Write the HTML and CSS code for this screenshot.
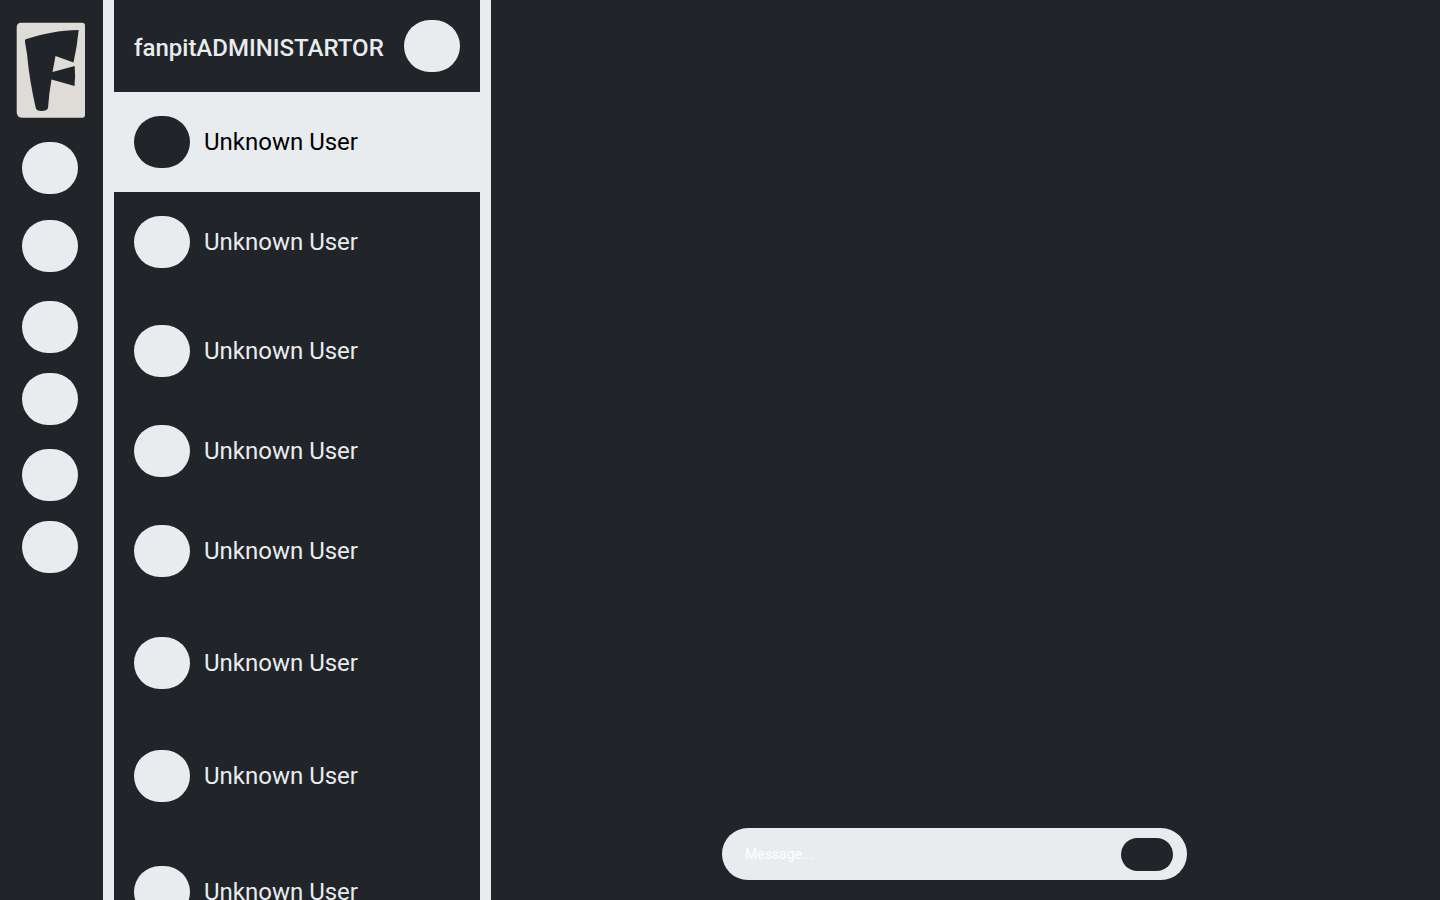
FILE: index.html
```html
<!DOCTYPE html>
<html lang="en">
<head>
<meta charset="utf-8">
<meta name="viewport" content="width=device-width, initial-scale=1">
<title>fanpit</title>
<link rel="stylesheet" href="styles.css">
</head>
<body>
<div class="app">
  <nav class="rail" aria-label="Servers">
    <a class="logo" href="#" aria-label="fanpit home">
      <svg width="70" height="96" viewBox="0 0 70 96" aria-hidden="true">
        <path d="M5 0.700H66Q69 0.700 69 3.500V93Q69 95.700 66 95.700H6Q0.700 95.700 0.700 90V5.500Q0.700 0.700 5 0.700Z" fill="#dfdbd6"/>
        <path d="M9 18.500Q9 17.300 10.500 17C26 12 44 8 62.700 8Q61 25 57.500 40.500L39.500 34L36.500 50L58.700 44Q59.600 54 58.500 64L35.500 57.500Q33 71 32 86Q31 89 25.500 89Q20.500 89 19.800 86Q13.500 59 11 32L9 20Z" fill="#212529"/>
      </svg>
    </a>
    <div class="rail-list">
      <button class="avatar" type="button" aria-label="Server 1"></button>
      <button class="avatar gap-l" type="button" aria-label="Server 2"></button>
      <button class="avatar gap-xl" type="button" aria-label="Server 3"></button>
      <button class="avatar gap-s" type="button" aria-label="Server 4"></button>
      <button class="avatar gap-m" type="button" aria-label="Server 5"></button>
      <button class="avatar gap-s" type="button" aria-label="Server 6"></button>
    </div>
  </nav>
  <aside class="contacts">
    <header class="profile">
      <h1 class="profile-name">fanpitADMINISTARTOR</h1>
      <button class="avatar" type="button" aria-label="Profile"></button>
    </header>
    <div class="users">
      <button class="user selected" type="button"><span class="avatar"></span><span>Unknown User</span></button>
      <button class="user" type="button"><span class="avatar"></span><span>Unknown User</span></button>
      <button class="user space-s" type="button"><span class="avatar"></span><span>Unknown User</span></button>
      <button class="user" type="button"><span class="avatar"></span><span>Unknown User</span></button>
      <button class="user" type="button"><span class="avatar"></span><span>Unknown User</span></button>
      <button class="user space-m" type="button"><span class="avatar"></span><span>Unknown User</span></button>
      <button class="user space-l" type="button"><span class="avatar"></span><span>Unknown User</span></button>
      <button class="user space-xl" type="button"><span class="avatar"></span><span>Unknown User</span></button>
    </div>
  </aside>
  <main class="chat">
    <form class="composer">
      <input class="message" type="text" placeholder="Message..." aria-label="Message">
      <button class="send" type="button" aria-label="Send"></button>
    </form>
  </main>
</div>
</body>
</html>
```
FILE: styles.css
```css
* {
  box-sizing: border-box;
}

body {
  margin: 0;
  background: #212529;
  color: #e9ecef;
  font-family: Roboto, sans-serif;
}

button {
  border: 0;
  padding: 0;
  font: inherit;
  color: inherit;
  background: none;
}

.app {
  display: flex;
  height: 100vh;
  overflow: hidden;
}

.rail {
  flex: none;
  width: 103px;
  padding: 22px 16px;
}

.logo,
.logo svg {
  display: block;
}

.rail-list {
  display: flex;
  flex-direction: column;
  padding: 24px 6px;
}

.avatar {
  flex: none;
  display: block;
  width: 56px;
  height: 52px;
  border-radius: 26px;
  background: #e9ecef;
}

.gap-s {
  margin-top: 20px;
}

.gap-m {
  margin-top: 24px;
}

.gap-l {
  margin-top: 26px;
}

.gap-xl {
  margin-top: 29px;
}

.contacts {
  flex: none;
  width: 388px;
  border: solid #e9ecef;
  border-width: 0 11px;
  overflow: hidden;
}

.profile {
  display: flex;
  align-items: center;
  justify-content: space-between;
  padding: 20px;
}

.profile-name {
  margin: 0;
  padding-top: 4px;
  font-size: 24px;
  line-height: 28px;
  font-weight: 500;
}

.users {
  display: flex;
  flex-direction: column;
}

.user {
  flex: none;
  display: flex;
  align-items: center;
  gap: 14px;
  padding: 24px 20px;
  font-size: 24px;
  line-height: 28px;
  font-weight: 400;
  text-align: left;
}

.selected {
  background: #e9ecef;
  color: #000;
}

.selected .avatar {
  background: #212529;
}

.space-s {
  margin-top: 9px;
}

.space-m {
  margin-top: 12px;
}

.space-l {
  margin-top: 13px;
}

.space-xl {
  margin-top: 16px;
}

.chat {
  flex: 1;
  min-width: 0;
  display: flex;
  flex-direction: column;
  justify-content: flex-end;
  align-items: center;
  padding: 20px;
}

.composer {
  display: flex;
  align-items: center;
  width: 100%;
  max-width: 465px;
  height: 52px;
  margin-right: 22px;
  padding: 0 14px 0 23px;
  border-radius: 26px;
  background: #e9ecef;
}

.message {
  flex: 1;
  min-width: 0;
  padding: 0;
  border: 0;
  outline: 0;
  background: none;
  color: #212529;
  font: 400 14px/20px Roboto, sans-serif;
}

.message::placeholder {
  color: #fff;
  opacity: 1;
}

.send {
  width: 52px;
  height: 33px;
  border-radius: 17px;
  background: #212529;
}
```
